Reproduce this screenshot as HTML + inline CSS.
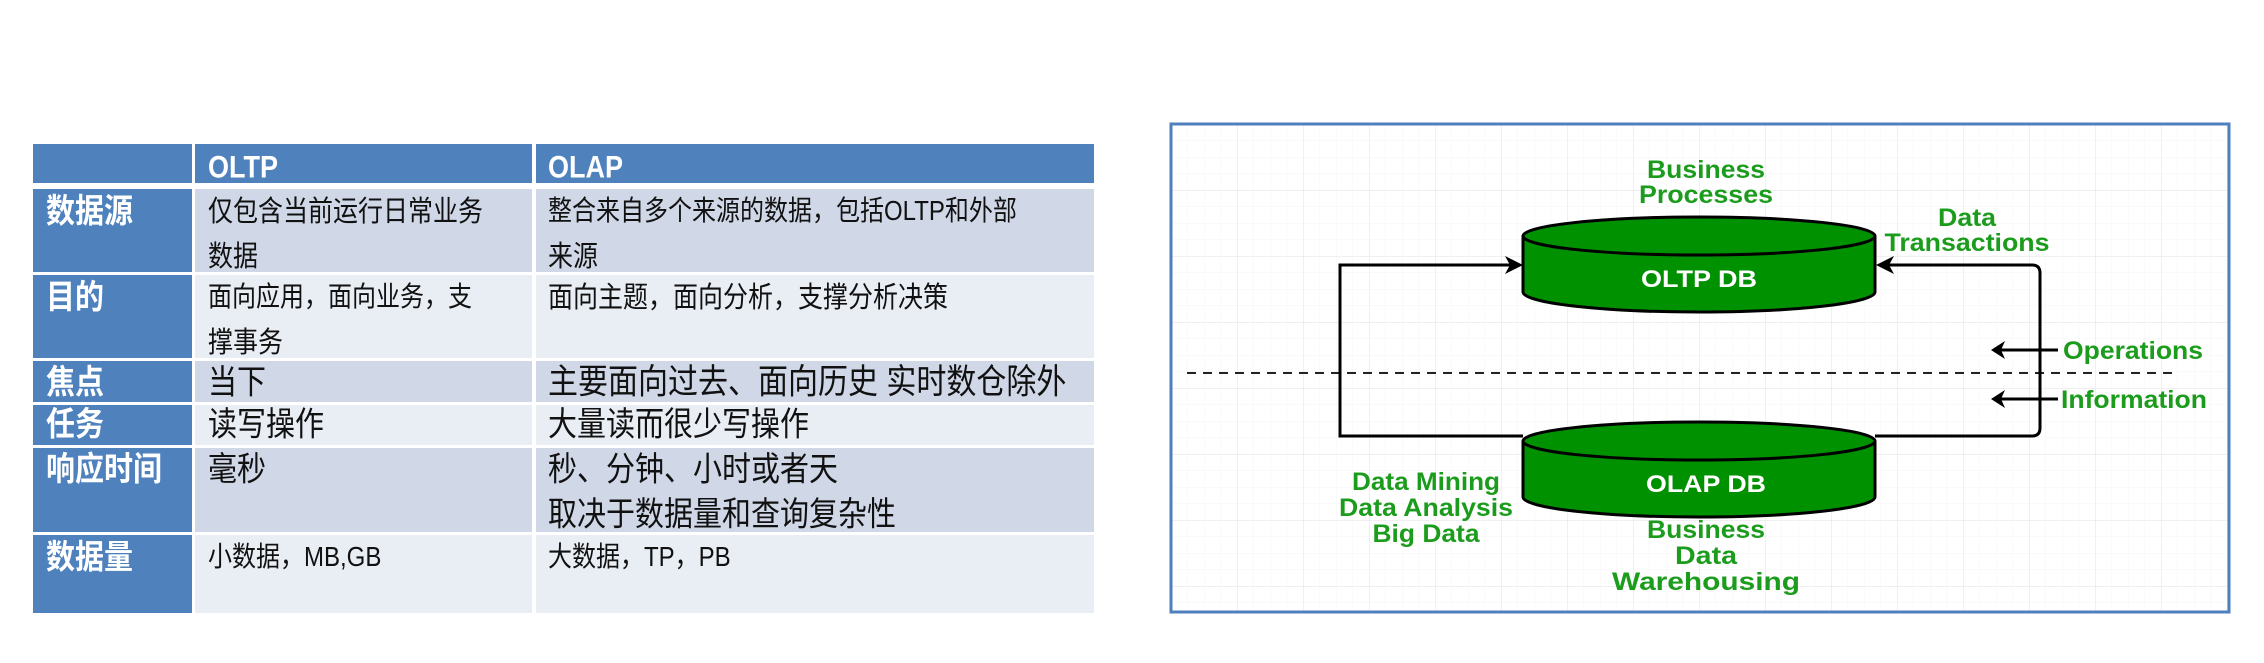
<!DOCTYPE html>
<html><head><meta charset="utf-8"><style>
body{margin:0;width:2264px;height:663px;background:#fff;position:relative;overflow:hidden;font-family:"Liberation Sans","Noto Sans CJK SC",sans-serif}
.c{position:absolute}
.t{position:absolute;white-space:nowrap;line-height:40px;color:#111;transform:scaleY(1.15);transform-origin:left center}
.l{color:#fff;font-weight:bold;font-size:29px}
.h{color:#fff;font-size:27px;font-weight:bold}
</style></head><body>
<div class="c" style="left:33px;top:144px;width:159px;height:39px;background:#4f81bd"></div>
<div class="c" style="left:195px;top:144px;width:337px;height:39px;background:#4f81bd"></div>
<div class="c" style="left:536px;top:144px;width:558px;height:39px;background:#4f81bd"></div>
<div class="c" style="left:33px;top:189px;width:159px;height:83px;background:#4f81bd"></div>
<div class="c" style="left:195px;top:189px;width:337px;height:83px;background:#d0d8e8"></div>
<div class="c" style="left:536px;top:189px;width:558px;height:83px;background:#d0d8e8"></div>
<div class="c" style="left:33px;top:275px;width:159px;height:83px;background:#4f81bd"></div>
<div class="c" style="left:195px;top:275px;width:337px;height:83px;background:#e9edf4"></div>
<div class="c" style="left:536px;top:275px;width:558px;height:83px;background:#e9edf4"></div>
<div class="c" style="left:33px;top:361px;width:159px;height:41px;background:#4f81bd"></div>
<div class="c" style="left:195px;top:361px;width:337px;height:41px;background:#d0d8e8"></div>
<div class="c" style="left:536px;top:361px;width:558px;height:41px;background:#d0d8e8"></div>
<div class="c" style="left:33px;top:405px;width:159px;height:40px;background:#4f81bd"></div>
<div class="c" style="left:195px;top:405px;width:337px;height:40px;background:#e9edf4"></div>
<div class="c" style="left:536px;top:405px;width:558px;height:40px;background:#e9edf4"></div>
<div class="c" style="left:33px;top:448px;width:159px;height:84px;background:#4f81bd"></div>
<div class="c" style="left:195px;top:448px;width:337px;height:84px;background:#d0d8e8"></div>
<div class="c" style="left:536px;top:448px;width:558px;height:84px;background:#d0d8e8"></div>
<div class="c" style="left:33px;top:535px;width:159px;height:78px;background:#4f81bd"></div>
<div class="c" style="left:195px;top:535px;width:337px;height:78px;background:#e9edf4"></div>
<div class="c" style="left:536px;top:535px;width:558px;height:78px;background:#e9edf4"></div>

<div class="t h" style="left:208px;top:147px">OLTP</div>
<div class="t h" style="left:548px;top:147px">OLAP</div>

<div class="t l" style="left:46px;top:192px">数据源</div>
<div class="t l" style="left:46px;top:278px">目的</div>
<div class="t l" style="left:46px;top:363px">焦点</div>
<div class="t l" style="left:46px;top:405px">任务</div>
<div class="t l" style="left:46px;top:450px">响应时间</div>
<div class="t l" style="left:46px;top:538px">数据量</div>

<div class="t" style="left:208px;top:192px;font-size:25px">仅包含当前运行日常业务</div>
<div class="t" style="left:208px;top:237px;font-size:25px">数据</div>
<div class="t" style="left:548px;top:192px;font-size:24px">整合来自多个来源的数据，包括OLTP和外部</div>
<div class="t" style="left:548px;top:237px;font-size:25px">来源</div>
<div class="t" style="left:208px;top:278px;font-size:24px">面向应用，面向业务，支</div>
<div class="t" style="left:208px;top:323px;font-size:25px">撑事务</div>
<div class="t" style="left:548px;top:278px;font-size:25px">面向主题，面向分析，支撑分析决策</div>
<div class="t" style="left:208px;top:363px;font-size:29px">当下</div>
<div class="t" style="left:548px;top:363px;font-size:30px">主要面向过去、面向历史 实时数仓除外</div>
<div class="t" style="left:208px;top:405px;font-size:29px">读写操作</div>
<div class="t" style="left:548px;top:405px;font-size:29px">大量读而很少写操作</div>
<div class="t" style="left:208px;top:450px;font-size:29px">毫秒</div>
<div class="t" style="left:548px;top:450px;font-size:29px">秒、分钟、小时或者天</div>
<div class="t" style="left:548px;top:495px;font-size:29px">取决于数据量和查询复杂性</div>
<div class="t" style="left:208px;top:538px;font-size:24px">小数据，MB,GB</div>
<div class="t" style="left:548px;top:538px;font-size:24px">大数据，TP，PB</div>

<svg class="c" style="left:0;top:0" width="2264" height="663" viewBox="0 0 2264 663">
<defs>
<pattern id="g1" x="1171" y="124" width="16.5" height="16.5" patternUnits="userSpaceOnUse"><path d="M0 0V16.5M0 0H16.5" stroke="#f5f5f5" stroke-width="1" fill="none"/></pattern>
<pattern id="g2" x="1171" y="124" width="66" height="66" patternUnits="userSpaceOnUse"><path d="M0 0V66M0 0H66" stroke="#ebebeb" stroke-width="1.5" fill="none"/></pattern>
</defs>
<rect x="1171" y="124" width="1058" height="488" fill="#fff"/>
<rect x="1171" y="124" width="1058" height="488" fill="url(#g1)"/>
<rect x="1171" y="124" width="1058" height="488" fill="url(#g2)"/>
<rect x="1171" y="124" width="1058" height="488" fill="none" stroke="#4f7fbd" stroke-width="3"/>

<line x1="1187" y1="373" x2="2173" y2="373" stroke="#222" stroke-width="2" stroke-dasharray="9,7"/>
<g fill="none" stroke="#000" stroke-width="3">
<path d="M1512 265H1340V436H1523"/>
<path d="M1875 436H2032Q2040 436 2040 428V273Q2040 265 2032 265H1888"/>
<path d="M2058 350H1996"/><path d="M2058 399H1996"/>
</g>
<g fill="#000">
<path d="M1523 265L1505 256L1510 265L1505 274Z"/>
<path d="M1876 265L1894 256L1889 265L1894 274Z"/>
<path d="M1991 350L2005 341L2001 350L2005 359Z"/>
<path d="M1991 399L2005 390L2001 399L2005 408Z"/>
</g>
<g stroke="#000" stroke-width="3" fill="#009100">
<path d="M1523 236V292A176 20 0 0 0 1875 292V236"/>
<ellipse cx="1699" cy="236" rx="176" ry="19"/>
<path d="M1523 441V497A176 20 0 0 0 1875 497V441"/>
<ellipse cx="1699" cy="441" rx="176" ry="19"/>
</g>
<g font-family="Liberation Sans, Arial, sans-serif" font-weight="bold" font-size="25" text-anchor="middle" fill="#1c9c1c">
<text x="1706" y="178" textLength="118" lengthAdjust="spacingAndGlyphs">Business</text>
<text x="1706" y="203" textLength="134" lengthAdjust="spacingAndGlyphs">Processes</text>
<text x="1967" y="226" textLength="58" lengthAdjust="spacingAndGlyphs">Data</text>
<text x="1967" y="251" textLength="165" lengthAdjust="spacingAndGlyphs">Transactions</text>
<text x="2133" y="359" textLength="140" lengthAdjust="spacingAndGlyphs">Operations</text>
<text x="2134" y="408" textLength="146" lengthAdjust="spacingAndGlyphs">Information</text>
<text x="1426" y="490" textLength="148" lengthAdjust="spacingAndGlyphs">Data Mining</text>
<text x="1426" y="516" textLength="174" lengthAdjust="spacingAndGlyphs">Data Analysis</text>
<text x="1426" y="542" textLength="107" lengthAdjust="spacingAndGlyphs">Big Data</text>
<text x="1706" y="538" textLength="118" lengthAdjust="spacingAndGlyphs">Business</text>
<text x="1706" y="564" textLength="62" lengthAdjust="spacingAndGlyphs">Data</text>
<text x="1706" y="590" textLength="188" lengthAdjust="spacingAndGlyphs">Warehousing</text>
</g>
<g font-family="Liberation Sans, Arial, sans-serif" font-weight="bold" font-size="24" text-anchor="middle" fill="#fff">
<text x="1699" y="287" textLength="116" lengthAdjust="spacingAndGlyphs">OLTP DB</text>
<text x="1706" y="492" textLength="120" lengthAdjust="spacingAndGlyphs">OLAP DB</text>
</g>
</svg>
</body></html>
